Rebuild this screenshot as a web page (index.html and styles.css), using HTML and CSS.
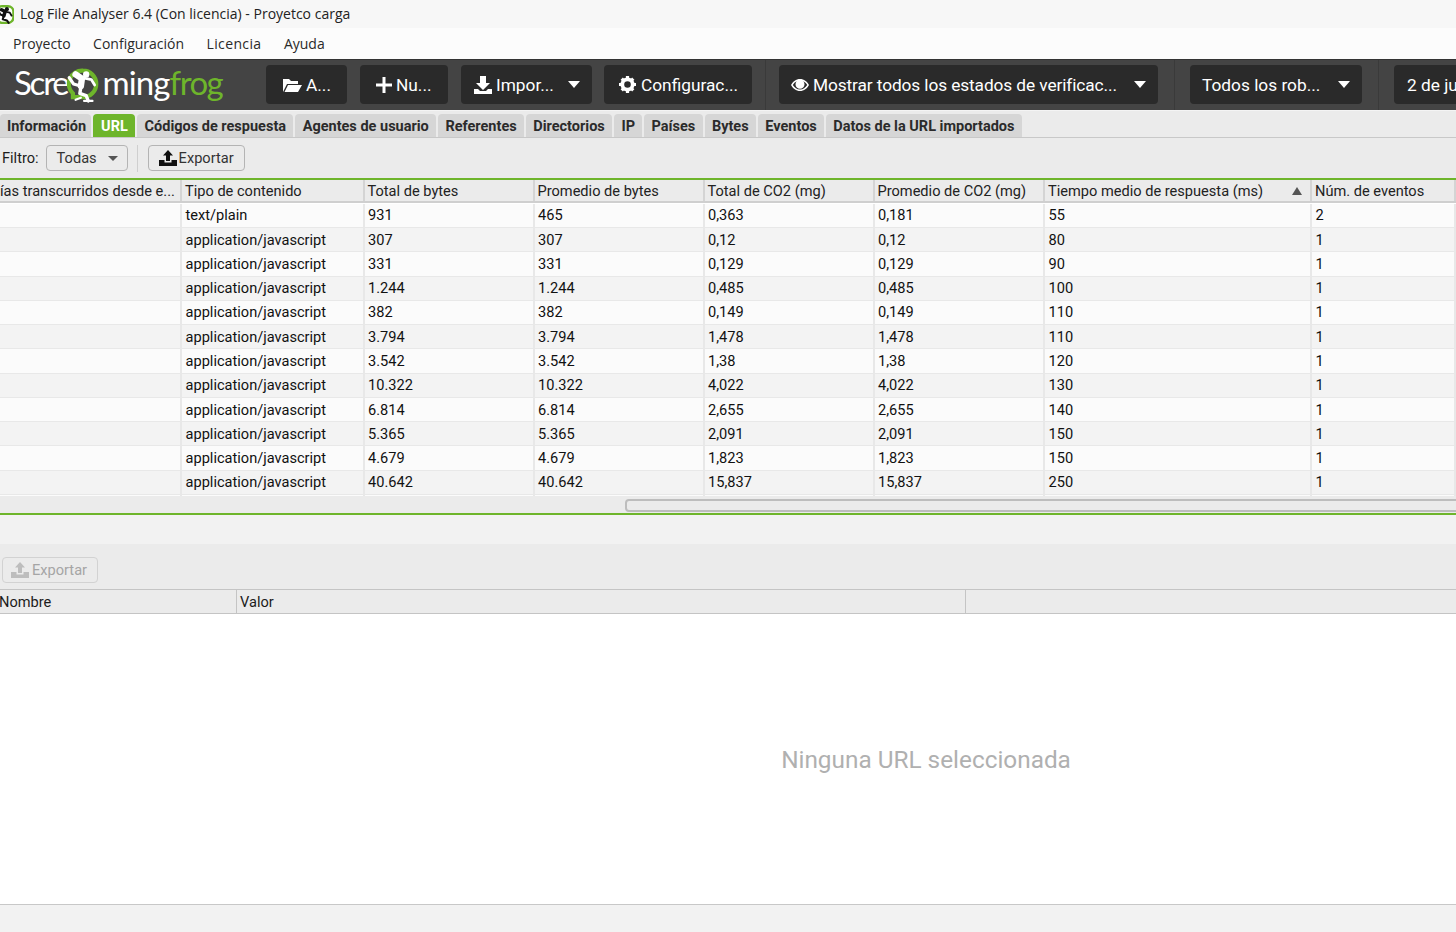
FILE: index.html
```html
<!DOCTYPE html>
<html lang="es">
<head>
<meta charset="utf-8">
<title>Log File Analyser</title>
<link rel="stylesheet" href="styles.css">
</head>
<body>
<div class="app">
  <header class="titlebar">
    <svg class="appicon" viewBox="0 0 32 32" width="19" height="19"><rect x="3" y="2" width="28" height="28" rx="9" fill="#fff" stroke="#6eb52b" stroke-width="4"/><g fill="none" stroke="#111" stroke-linecap="round" stroke-linejoin="round"><path d="M11 8L17 11L15 18" stroke-width="6"/><path d="M17 11L25 13L28 18" stroke-width="3"/><path d="M15 18L9 16L5 9" stroke-width="3.500"/><path d="M15 18L13 24L20 26L23 30" stroke-width="3.500"/></g><circle cx="20" cy="7" r="3.500" fill="#111"/></svg>
    <span class="titletext">Log File Analyser 6.4 (Con licencia) - Proyetco carga</span>
  </header>
  <nav class="menubar">
    <span>Proyecto</span><span>Configuración</span><span class="m-wide">Licencia</span><span>Ayuda</span>
  </nav>
  <section class="toolbar">
    <div class="logo">
      <span class="l-scre">Scre</span>
      <svg class="frog" viewBox="0 0 32 34" width="34" height="36">
        <path d="M16 3.500a12.500 12.500 0 0 1 0 25H6.500V25A12.500 12.500 0 0 1 16 3.500z" fill="none" stroke="#6eb52b" stroke-width="4"/>
        <g fill="none" stroke="#fff" stroke-linecap="round" stroke-linejoin="round">
          <path d="M9 7L15 11L14 18" stroke-width="6"/>
          <path d="M15 10L24 12L27 17" stroke-width="2.600"/>
          <path d="M14 18L7 16L3 10" stroke-width="3"/>
          <path d="M14 19L13 25L19 27L21 32" stroke-width="3.200"/>
          <path d="M17 32H25M9 31L14 29" stroke-width="2"/>
        </g>
        <circle cx="19" cy="7" r="3" fill="#fff"/>
      </svg>
      <span class="l-ming">ming</span><span class="logogreen">frog</span>
    </div>
    <button class="tbtn b-a"><svg viewBox="0 0 20 16" width="20" height="16"><path d="M1 15V2h6l2 2h7v3H5L1 15zm1.500 0L6 8h14l-4 7z" fill="#fff"/></svg>A...</button>
    <button class="tbtn b-nu"><svg viewBox="0 0 16 16" width="16" height="16"><path d="M6.500 0h3v6.500H16v3H9.500V16h-3V9.500H0v-3h6.500z" fill="#fff"/></svg>Nu...</button>
    <button class="tbtn b-imp"><svg viewBox="0 0 18 18" width="18" height="18"><path d="M6 0h6v7h4l-7 7-7-7h4z" fill="#fff"/><path d="M0 13h4l2 2h6l2-2h4v5H0z" fill="#fff"/></svg>Impor...<i class="caret"></i></button>
    <button class="tbtn b-conf"><svg viewBox="0 0 18 18" width="17" height="17"><circle cx="9" cy="9" r="5.500" fill="none" stroke="#fff" stroke-width="4"/><path d="M7.300 0h3.400v4H7.300zM7.300 14h3.400v4H7.300zM0 7.300h4v3.400H0zM14 7.300h4v3.400h-4zM1.700 4.100l2.400-2.400 2.800 2.800-2.400 2.400zM11.100 13.500l2.400-2.400 2.800 2.800-2.400 2.400zM1.700 13.900l2.800-2.800 2.400 2.400-2.800 2.800zM11.100 4.500l2.800-2.800 2.400 2.400-2.800 2.800z" fill="#fff"/></svg>Configurac...</button>
    <span class="tsep s1"></span>
    <button class="tbtn b-ver"><svg viewBox="0 0 18 12" width="18" height="12"><path d="M0 6c2-3.500 5-6 9-6s7 2.500 9 6c-2 3.500-5 6-9 6S2 9.500 0 6zm1.800 0C3.500 8.700 6 10.500 9 10.500S14.500 8.700 16.200 6c-1-1.600-2.300-2.900-3.900-3.700A4.500 4.500 0 1 1 5.700 2.300 9 9 0 0 0 1.800 6z" fill="#fff" fill-rule="evenodd"/></svg>Mostrar todos los estados de verificac...<i class="caret"></i></button>
    <span class="tsep s2"></span>
    <button class="tbtn b-rob">Todos los rob...<i class="caret"></i></button>
    <span class="tsep s2"></span>
    <button class="tbtn b-date">2 de ju</button>
  </section>
  <nav class="tabs">
    <span class="tab">Información</span><span class="tab active">URL</span><span class="tab">Códigos de respuesta</span><span class="tab">Agentes de usuario</span><span class="tab">Referentes</span><span class="tab">Directorios</span><span class="tab">IP</span><span class="tab">Países</span><span class="tab">Bytes</span><span class="tab">Eventos</span><span class="tab">Datos de la URL importados</span>
  </nav>
  <div class="filterbar">
    <label class="flabel">Filtro:</label>
    <button class="select">Todas<i class="caret small"></i></button>
    <span class="vsep"></span>
    <button class="export"><svg viewBox="0 0 18 16" width="18" height="16"><path d="M9 0l5 5.500h-3V11H7V5.500H4z" fill="#111"/><path d="M0 10h5.500v2.500h7V10H18v6H0z" fill="#111"/></svg>Exportar</button>
  </div>
  <section class="grid">
    <div class="row head">
      <span class="c clip">ías transcurridos desde e...</span><span class="c">Tipo de contenido</span><span class="c">Total de bytes</span><span class="c">Promedio de bytes</span><span class="c">Total de CO2 (mg)</span><span class="c">Promedio de CO2 (mg)</span><span class="c sorted">Tiempo medio de respuesta (ms)<i class="sortarrow"></i></span><span class="c">Núm. de eventos</span>
    </div>
    <div class="rows">
      <div class="row"><span class="c"></span><span class="c">text/plain</span><span class="c">931</span><span class="c">465</span><span class="c">0,363</span><span class="c">0,181</span><span class="c">55</span><span class="c">2</span></div>
      <div class="row"><span class="c"></span><span class="c">application/javascript</span><span class="c">307</span><span class="c">307</span><span class="c">0,12</span><span class="c">0,12</span><span class="c">80</span><span class="c">1</span></div>
      <div class="row"><span class="c"></span><span class="c">application/javascript</span><span class="c">331</span><span class="c">331</span><span class="c">0,129</span><span class="c">0,129</span><span class="c">90</span><span class="c">1</span></div>
      <div class="row"><span class="c"></span><span class="c">application/javascript</span><span class="c">1.244</span><span class="c">1.244</span><span class="c">0,485</span><span class="c">0,485</span><span class="c">100</span><span class="c">1</span></div>
      <div class="row"><span class="c"></span><span class="c">application/javascript</span><span class="c">382</span><span class="c">382</span><span class="c">0,149</span><span class="c">0,149</span><span class="c">110</span><span class="c">1</span></div>
      <div class="row"><span class="c"></span><span class="c">application/javascript</span><span class="c">3.794</span><span class="c">3.794</span><span class="c">1,478</span><span class="c">1,478</span><span class="c">110</span><span class="c">1</span></div>
      <div class="row"><span class="c"></span><span class="c">application/javascript</span><span class="c">3.542</span><span class="c">3.542</span><span class="c">1,38</span><span class="c">1,38</span><span class="c">120</span><span class="c">1</span></div>
      <div class="row"><span class="c"></span><span class="c">application/javascript</span><span class="c">10.322</span><span class="c">10.322</span><span class="c">4,022</span><span class="c">4,022</span><span class="c">130</span><span class="c">1</span></div>
      <div class="row"><span class="c"></span><span class="c">application/javascript</span><span class="c">6.814</span><span class="c">6.814</span><span class="c">2,655</span><span class="c">2,655</span><span class="c">140</span><span class="c">1</span></div>
      <div class="row"><span class="c"></span><span class="c">application/javascript</span><span class="c">5.365</span><span class="c">5.365</span><span class="c">2,091</span><span class="c">2,091</span><span class="c">150</span><span class="c">1</span></div>
      <div class="row"><span class="c"></span><span class="c">application/javascript</span><span class="c">4.679</span><span class="c">4.679</span><span class="c">1,823</span><span class="c">1,823</span><span class="c">150</span><span class="c">1</span></div>
      <div class="row"><span class="c"></span><span class="c">application/javascript</span><span class="c">40.642</span><span class="c">40.642</span><span class="c">15,837</span><span class="c">15,837</span><span class="c">250</span><span class="c">1</span></div>
      <div class="row"><span class="c"></span><span class="c"></span><span class="c"></span><span class="c"></span><span class="c"></span><span class="c"></span><span class="c"></span><span class="c"></span></div>
    </div>
    <div class="hscroll"><span class="arrow"></span><span class="thumb"></span></div>
  </section>
  <div class="band"></div>
  <div class="lowerbar">
    <button class="export disabled"><svg viewBox="0 0 18 16" width="18" height="16"><path d="M9 0l5 5.500h-3V11H7V5.500H4z" fill="#bdbdbd"/><path d="M0 10h5.500v2.500h7V10H18v6H0z" fill="#bdbdbd"/></svg>Exportar</button>
  </div>
  <div class="dhead"><span class="d1">Nombre</span><span class="d2">Valor</span><span class="d3"></span></div>
  <main class="empty"><span>Ninguna URL seleccionada</span></main>
  <footer class="status"></footer>
</div>
</body>
</html>
```
FILE: styles.css
```css
* { box-sizing: border-box; }
html, body { margin: 0; padding: 0; height: 100%; overflow: hidden; }
body { font-family: Roboto, "Liberation Sans", sans-serif; font-size: 14.6px; color: #1c1c1c; background: #ebebeb; }
.app { width: 1456px; height: 932px; display: flex; flex-direction: column; overflow: hidden; }
button { font: inherit; }

.titlebar { height: 28px; flex: none; background: #f7f7f7; display: flex; align-items: center; color: #222; font-family: "Open Sans", Roboto, sans-serif; font-size: 14px; overflow: hidden; }
.appicon { flex: none; margin: 0 6px 0 -5px; }
.titletext { position: relative; top: -1px; }

.menubar { height: 31px; flex: none; background: #fcfcfc; display: flex; align-items: center; padding: 0 0 0 13px; gap: 22.500px; font-family: "Open Sans", Roboto, sans-serif; font-size: 14px; color: #2a2a2a; }
.m-wide { letter-spacing: 0.35px; }

.toolbar { height: 52px; flex: none; background: #444; border-top: 1px solid #333; border-bottom: 1px solid #f4f4f4; padding-bottom: 1px; display: flex; align-items: center; color: #fff; font-size: 17.3px; white-space: nowrap; }
.logo { width: 266px; flex: none; display: flex; align-items: center; padding: 0 0 4px 14px; font-family: Lato, "Open Sans", sans-serif; font-weight: 400; font-size: 33px; letter-spacing: -1.500px; color: #fff; line-height: 1; }
.l-scre { letter-spacing: -2.200px; }
.l-ming { letter-spacing: -0.900px; }
.frog { flex: none; margin: 4px 3px 0 -2px; }
.logogreen { color: #6eb52b; }
.tbtn { height: 39px; flex: none; background: #2a2a2a; border: 0; border-radius: 4px; color: #fff; display: flex; align-items: center; justify-content: flex-start; padding: 0 0 0 16px; gap: 4px; white-space: nowrap; }
.b-a { width: 81px; }
.b-nu { width: 88px; margin-left: 13px; }
.b-imp { width: 131px; margin-left: 13px; padding-left: 13px; }
.b-conf { width: 148px; margin-left: 12px; padding-left: 15px; gap: 5px; }
.tsep { width: 1px; height: 50px; flex: none; background: #3a3a3a; }
.s1 { margin: 0 13px; }
.s2 { margin: 0 15px 0 16px; }
.b-ver { width: 379px; padding-left: 12px; letter-spacing: -0.1px; }
.b-rob { width: 172px; padding-left: 12px; }
.b-date { width: 200px; padding-left: 13px; }
.caret { width: 0; height: 0; border-left: 6px solid transparent; border-right: 6px solid transparent; border-top: 7px solid #fff; margin-left: auto; margin-right: 12px; }
.caret.small { border-left-width: 5px; border-right-width: 5px; border-top: 5px solid #555; margin-right: 0; }

.tabs { height: 27px; flex: none; background: #ebebeb; border-bottom: 1px solid #c8c8c8; display: flex; align-items: stretch; gap: 2px; padding: 3px 0 0 0; font-weight: 700; font-size: 14.5px; color: #2b2b2b; white-space: nowrap; }
.tab { background: #d6d6d6; border-radius: 4px 4px 0 0; padding: 1px 7.300px 0; display: flex; align-items: center; }
.tab:first-child { padding-left: 7px; padding-right: 5px; }
.tab.active { background: #6eb52b; color: #fff; padding: 1px 7.500px 0 8px; }

.filterbar { height: 40px; flex: none; display: flex; align-items: center; padding: 0 0 0 2px; background: #ebebeb; }
.flabel { margin-right: 7px; }
.select { width: 82px; height: 26px; background: #ebebeb; border: 1px solid #b4b4b4; border-radius: 4px; display: flex; align-items: center; justify-content: space-between; padding: 0 9px 0 10px; color: #333; }
.vsep { width: 1px; height: 27px; background: #cfcfcf; margin: 0 10px 0 9px; }
.export { height: 26px; width: 97px; background: #ebebeb; border: 1px solid #b4b4b4; border-radius: 4px; display: flex; align-items: center; gap: 2px; padding: 0 0 0 10px; color: #333; }
.export.disabled { border-color: #d2d2d2; color: #a5a5a5; margin-left: 2px; width: 96px; padding-left: 8px; gap: 3px; }

.grid { height: 335px; flex: none; border-top: 2px solid #6eb52b; display: flex; flex-direction: column; background: #fff; }
.row { display: grid; grid-template-columns: 182px 182.500px 170px 170px 170px 170.500px 267px 1fr; height: 24.270px; flex: none; border-bottom: 1px solid #e8e8e8; }
.row .c { padding: 0 0 0 3.500px; display: flex; align-items: center; white-space: nowrap; overflow: hidden; border-right: 2px solid #e8e8e8; color: #111; }
.row:nth-child(even) { background: #f3f3f3; }
.row:nth-child(odd) { background: #fbfbfb; }
.head.row { height: 23px; background: #ebebeb; border-bottom: 2px solid #cfcfcf; flex: none; }
.head .c { border-right: 2px solid #d4d4d4; color: #222; padding-left: 3px; }
.head .clip { padding-left: 0; }
.sorted { position: relative; }
.sortarrow { position: absolute; right: 8px; top: 7px; width: 0; height: 0; border-left: 5px solid transparent; border-right: 5px solid transparent; border-bottom: 8px solid #555; }
.rows { flex: 1; overflow: hidden; min-height: 0; padding-top: 0.800px; }
.hscroll { height: 17px; flex: none; background: #ebebeb; position: relative; }
.arrow { position: absolute; left: -4px; top: 6px; width: 6px; height: 6px; border-left: 1px solid #555; border-bottom: 1px solid #555; transform: rotate(45deg); }
.thumb { position: absolute; left: 625px; right: -6px; top: 3px; height: 13px; background: #ebebeb; border: 2px solid #bdbdbd; border-radius: 4px; }

.band { height: 31px; flex: none; background: #f2f2f2; border-top: 2px solid #6eb52b; }
.lowerbar { height: 45px; flex: none; display: flex; align-items: center; background: #ebebeb; padding-top: 7px; }
.dhead { height: 25px; flex: none; display: grid; grid-template-columns: 237px 729px 1fr; border-top: 1px solid #c4c4c4; border-bottom: 1px solid #c4c4c4; background: #ebebeb; }
.dhead span { display: flex; align-items: center; padding-left: 3px; border-right: 1px solid #c4c4c4; }
.dhead .d1 { padding-left: 0; text-indent: -1px; }
.dhead .d3 { border-right: 0; }
.empty { flex: 1; background: #fff; display: flex; align-items: center; justify-content: center; color: #b0b0b0; font-size: 24.350px; padding-left: 396px; min-height: 0; white-space: nowrap; }
.status { height: 28px; flex: none; background: #f2f2f2; border-top: 1px solid #c8c8c8; }
```
